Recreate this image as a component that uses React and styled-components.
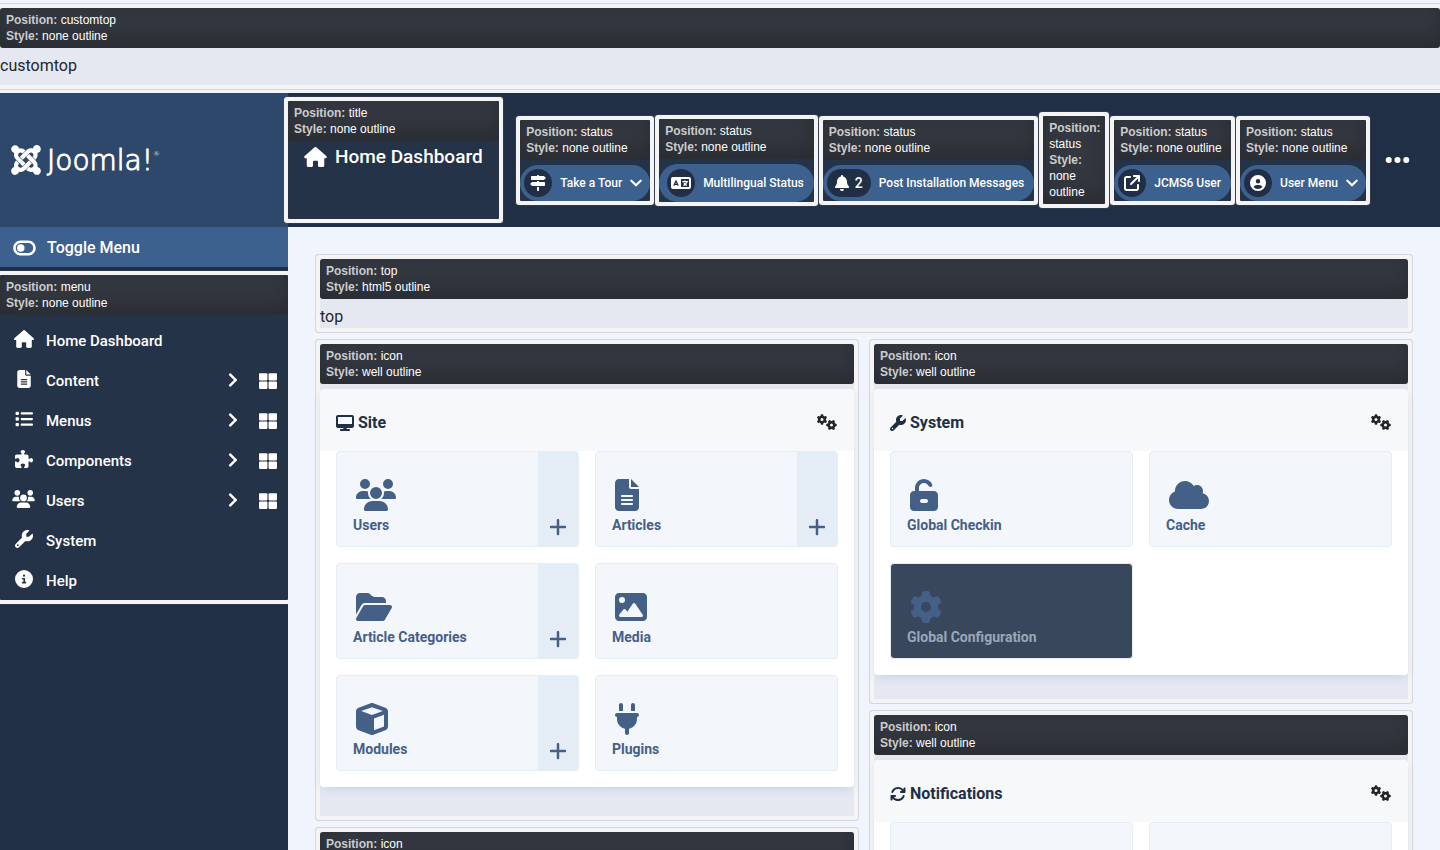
import React from "react";
import styled, { createGlobalStyle, css } from "styled-components";
import {
  FaHouse, FaFileLines, FaList, FaPuzzlePiece, FaUsers, FaWrench, FaCircleInfo,
  FaToggleOff, FaSignsPost, FaLanguage, FaBell, FaArrowUpRightFromSquare,
  FaCircleUser, FaEllipsis, FaDesktop, FaGears,
  FaFolderOpen, FaImage, FaCube, FaPlug, FaUnlockKeyhole, FaCloud, FaGear,
  FaArrowsRotate, FaPlus, FaJoomla,
} from "react-icons/fa6";
import { FaThLarge, FaChevronDown, FaChevronRight } from "react-icons/fa";

const GlobalStyle = createGlobalStyle`
  *, *::before, *::after { box-sizing: border-box; }
  body {
    margin: 0;
    background: #f0f4fd;
    color: #22262a;
    font: 400 16px/24px Roboto, "Liberation Sans", sans-serif;
  }
  a { color: inherit; text-decoration: none; }
  button { border: 0; padding: 0; background: none; color: inherit; font: inherit; cursor: pointer; }
  h1, h2, p, ul { margin: 0; padding: 0; }
  ul { list-style: none; }
`;

/* Glyphs whose drawing is not 512 units wide, by their width in units. */
const glyphUnits = new Map([
  [FaHouse, 576], [FaFileLines, 384], [FaUsers, 640], [FaToggleOff, 576],
  [FaLanguage, 640], [FaBell, 448], [FaEllipsis, 448], [FaDesktop, 576],
  [FaGears, 640], [FaFolderOpen, 576], [FaPlug, 384], [FaUnlockKeyhole, 448],
  [FaCloud, 640], [FaPlus, 448], [FaJoomla, 448], [FaChevronDown, 448],
  [FaChevronRight, 320],
]);

const GlyphBox = styled.span`
  display: inline-flex;
  flex: none;
  align-items: center;
  justify-content: center;
  svg {
    flex: none;
    width: ${(p) => p.$width}px;
    height: ${(p) => p.$height}px;
  }
`;

function Glyph({ icon: Drawing, size = 16, className }) {
  const units = glyphUnits.get(Drawing) || 512;
  return (
    <GlyphBox className={className} $height={size} $width={Math.round((size * units) / 512)}>
      <Drawing />
    </GlyphBox>
  );
}

const Shell = styled.div`
  display: flex;
  flex-direction: column;
  height: 100vh;
  overflow: hidden;
`;

const PreviewBox = styled.section`
  background: rgba(100, 100, 100, 0.08);
  border-radius: 1px;
  box-shadow: 0 0 0 4px #f4f4f4, 0 0 0 5px rgba(100, 100, 100, 0.2);
  padding-bottom: ${(p) => p.$bottom || 0}px;
`;

const PreviewInfo = styled.div`
  margin-bottom: ${(p) => (p.$last ? 0 : 5)}px;
  padding: 4px 6px;
  border-radius: 3px;
  background: #33373f;
  box-shadow: inset 0 -10px 20px rgba(0, 0, 0, 0.2);
  color: #fff;
  font: 400 12px/16px "Liberation Sans", Arial, sans-serif;
  strong { color: #ccc; font-weight: 700; }
`;

function Preview({ position, chrome = "none outline", only, children, ...rest }) {
  return (
    <PreviewBox {...rest}>
      <PreviewInfo $last={only}>
        <div><strong>Position:</strong> {position}</div>
        <div><strong>Style:</strong> {chrome}</div>
      </PreviewInfo>
      {children}
    </PreviewBox>
  );
}

const ModuleText = styled.p`
  padding-top: 2px;
  line-height: 22px;
`;

const TopStrip = styled.div`
  flex: none;
  padding: 8px 0;
`;

const Header = styled.header`
  display: flex;
  flex: none;
  height: 134px;
  background: #202f46;
  color: #fff;
`;

const Brand = styled.a`
  display: flex;
  flex: none;
  align-items: center;
  gap: 6px;
  width: 288px;
  padding-left: 11px;
  background: #2d486b;
`;

const Wordmark = styled.span`
  display: flex;
  padding-top: 2px;
  font: 200 28px/30px "DejaVu Sans", sans-serif;
  -webkit-text-stroke: 1px #fff;
  sup {
    font-size: 7px;
    line-height: 16px;
    -webkit-text-stroke: 0;
  }
`;

const TitleBox = styled(Preview)`
  align-self: center;
  flex: none;
  width: 211px;
  height: 118px;
`;

const PageTitle = styled.h1`
  display: flex;
  align-items: center;
  gap: 8px;
  padding: 0 16px;
  font-size: 19px;
  line-height: 22px;
  font-weight: 500;
  white-space: nowrap;
`;

const StatusBar = styled.nav`
  display: flex;
  flex: 1;
  align-items: center;
  justify-content: flex-end;
  gap: 9px;
  padding-right: 30px;
`;

const StatusBox = styled(Preview)`
  flex: none;
  width: ${(p) => (p.only ? "62px" : "auto")};
`;

const Pill = styled.button`
  display: flex;
  align-items: center;
  gap: 8px;
  width: 100%;
  height: ${(p) => (p.$roomy ? 38 : 36)}px;
  padding: 0 ${(p) => (p.$menu ? 8 : 10)}px 0 ${(p) => (p.$roomy ? 8 : 4)}px;
  border-radius: 19px;
  background: #3d618f;
  font-size: 12px;
  font-weight: 500;
  white-space: nowrap;
`;

const PillBadge = styled.span`
  display: flex;
  align-items: center;
  justify-content: center;
  gap: 6px;
  min-width: 28px;
  height: 28px;
  padding: 0 ${(p) => (p.$count ? 8 : 0)}px;
  border-radius: 14px;
  background: #202f46;
  font-size: 14px;
`;

const MoreButton = styled.button`
  display: flex;
  margin-left: 10px;
`;

const Body = styled.div`
  display: flex;
  flex: 1;
  min-height: 0;
`;

const Sidebar = styled.aside`
  flex: none;
  width: 288px;
  overflow: hidden;
  background: #202f46;
  color: #fff;
  font-weight: 500;
`;

const ToggleButton = styled.button`
  display: flex;
  align-items: center;
  gap: 11px;
  width: 100%;
  height: 40px;
  margin-bottom: 8px;
  padding: 2px 0 0 13px;
  background: #3d618f;
`;

const MenuRow = styled.li`
  display: flex;
  align-items: center;
  height: 40px;
  padding: 0 11px 0 12px;
`;

const MenuLink = styled.a`
  display: flex;
  flex: 1;
  align-items: center;
  gap: 11px;
  padding-top: 2px;
  font-size: 15px;
`;

const MenuGlyph = styled(Glyph)`
  width: 23px;
  padding-bottom: 4px;
`;

const ShortcutLink = styled.a`
  display: flex;
  margin-left: 21px;
  padding-top: 2px;
`;

const Main = styled.main`
  flex: 1;
  min-width: 0;
  padding: 32px;
`;

const Columns = styled.div`
  display: grid;
  grid-template-columns: 1fr 1fr;
  gap: 20px;
  margin-top: 16px;
`;

const Column = styled.div`
  display: flex;
  flex-direction: column;
  gap: 16px;
`;

const Card = styled.div`
  padding-bottom: 16px;
  border-radius: 4px;
  background: #fff;
  box-shadow: 0 2px 10px -8px rgba(26, 74, 144, 0.4), 0 4px 10px rgba(40, 90, 140, 0.07);
`;

const CardHead = styled.div`
  display: flex;
  align-items: center;
  justify-content: space-between;
  height: 62px;
  padding: 6px 17px 0 16px;
  border-radius: 4px 4px 0 0;
  background: #f7f8fa;
`;

const CardTitle = styled.h2`
  display: flex;
  align-items: center;
  gap: 4px;
  color: #202f46;
  font-size: 16px;
  font-weight: 700;
`;

const CardMenuButton = styled.button`
  display: flex;
  padding-bottom: 2px;
`;

const TileGrid = styled.div`
  display: grid;
  grid-template-columns: 1fr 1fr;
  gap: 16px;
  padding: 0 16px;
`;

const Tile = styled.div`
  display: flex;
  height: 96px;
  overflow: hidden;
  border: 1px solid #e4ecf6;
  border-radius: 4px;
  background: #f3f6fb;
  color: #456087;
  ${(p) => p.$active && css`background: #38475b;`}
`;

const TileLink = styled.a`
  display: flex;
  flex: 1;
  flex-direction: column;
  align-items: flex-start;
  padding: 27px 0 0 16px;
  color: ${(p) => (p.$active ? "#9aa7b7" : "inherit")};
  font-size: 14px;
  line-height: 28px;
  font-weight: 700;
`;

const TileGlyph = styled(Glyph)`
  height: 32px;
  padding-left: 3px;
  color: #456087;
`;

const AddLink = styled.a`
  display: flex;
  flex: none;
  align-items: flex-end;
  justify-content: center;
  width: 40px;
  padding-bottom: 9px;
  background: #e4ecf5;
`;

const statusItems = [
  { label: "Take a Tour", icon: FaSignsPost, menu: true },
  { label: "Multilingual Status", icon: FaLanguage, roomy: true },
  { label: "Post Installation Messages", icon: FaBell, count: 2 },
  { only: true },
  { label: "JCMS6 User", icon: FaArrowUpRightFromSquare },
  { label: "User Menu", icon: FaCircleUser, menu: true },
];

const menu = [
  { label: "Home Dashboard", icon: FaHouse },
  { label: "Content", icon: FaFileLines, nested: true },
  { label: "Menus", icon: FaList, nested: true },
  { label: "Components", icon: FaPuzzlePiece, nested: true },
  { label: "Users", icon: FaUsers, nested: true },
  { label: "System", icon: FaWrench },
  { label: "Help", icon: FaCircleInfo },
];

const siteTiles = [
  { label: "Users", icon: FaUsers, add: true },
  { label: "Articles", icon: FaFileLines, add: true },
  { label: "Article Categories", icon: FaFolderOpen, add: true },
  { label: "Media", icon: FaImage },
  { label: "Modules", icon: FaCube, add: true },
  { label: "Plugins", icon: FaPlug },
];

const systemTiles = [
  { label: "Global Checkin", icon: FaUnlockKeyhole },
  { label: "Cache", icon: FaCloud },
  { label: "Global Configuration", icon: FaGear, active: true },
];

function StatusItem({ item }) {
  if (item.only) return <StatusBox position="status" only />;
  return (
    <StatusBox position="status">
      <Pill type="button" $roomy={item.roomy} $menu={item.menu}>
        <PillBadge $count={item.count}>
          <Glyph icon={item.icon} />
          {item.count}
        </PillBadge>
        {item.label}
        {item.menu && <Glyph icon={FaChevronDown} size={14} />}
      </Pill>
    </StatusBox>
  );
}

function QuickPanel({ title, icon, tiles, bottom }) {
  return (
    <Preview position="icon" chrome="well outline" $bottom={bottom}>
      <Card>
        <CardHead>
          <CardTitle><Glyph icon={icon} />{title}</CardTitle>
          <CardMenuButton type="button" aria-label={`${title} options`}>
            <Glyph icon={FaGears} />
          </CardMenuButton>
        </CardHead>
        <TileGrid>
          {tiles.map((t, i) => (
            <Tile key={i} $active={t.active}>
              {t.label && (
                <TileLink href="#" $active={t.active}>
                  <TileGlyph icon={t.icon} size={32} />
                  {t.label}
                </TileLink>
              )}
              {t.add && (
                <AddLink href="#" aria-label={`Add ${t.label}`}>
                  <Glyph icon={FaPlus} size={20} />
                </AddLink>
              )}
            </Tile>
          ))}
        </TileGrid>
      </Card>
    </Preview>
  );
}

export default function App() {
  return (
    <Shell>
      <GlobalStyle />
      <TopStrip>
        <Preview position="customtop" $bottom={8}><ModuleText>customtop</ModuleText></Preview>
      </TopStrip>
      <Header>
        <Brand href="#">
          <Glyph icon={FaJoomla} size={34} />
          <Wordmark>Joomla!<sup>®</sup></Wordmark>
        </Brand>
        <TitleBox position="title">
          <PageTitle><Glyph icon={FaHouse} size={20} />Home Dashboard</PageTitle>
        </TitleBox>
        <StatusBar>
          {statusItems.map((item, i) => <StatusItem key={i} item={item} />)}
          <MoreButton type="button" aria-label="More"><Glyph icon={FaEllipsis} size={28} /></MoreButton>
        </StatusBar>
      </Header>
      <Body>
        <Sidebar>
          <ToggleButton type="button"><Glyph icon={FaToggleOff} size={20} />Toggle Menu</ToggleButton>
          <Preview position="menu">
            <ul>
              {menu.map((m) => (
                <MenuRow key={m.label}>
                  <MenuLink href="#"><MenuGlyph icon={m.icon} size={18} />{m.label}</MenuLink>
                  {m.nested && (
                    <>
                      <Glyph icon={FaChevronRight} />
                      <ShortcutLink href="#" aria-label={`${m.label} dashboard`}>
                        <Glyph icon={FaThLarge} size={18} />
                      </ShortcutLink>
                    </>
                  )}
                </MenuRow>
              ))}
            </ul>
          </Preview>
        </Sidebar>
        <Main>
          <Preview position="top" chrome="html5 outline"><ModuleText>top</ModuleText></Preview>
          <Columns>
            <Column>
              <QuickPanel title="Site" icon={FaDesktop} tiles={siteTiles} bottom={29} />
              <QuickPanel title="Logged-in Users" icon={FaUsers} tiles={[{}, {}]} bottom={24} />
            </Column>
            <Column>
              <QuickPanel title="System" icon={FaWrench} tiles={systemTiles} bottom={24} />
              <QuickPanel title="Notifications" icon={FaArrowsRotate} tiles={[{}, {}]} bottom={24} />
            </Column>
          </Columns>
        </Main>
      </Body>
    </Shell>
  );
}
